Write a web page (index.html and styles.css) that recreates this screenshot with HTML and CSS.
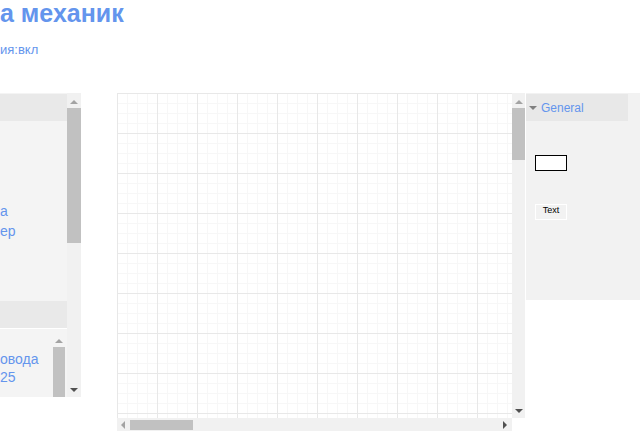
FILE: index.html
```html
<!DOCTYPE html>
<html lang="ru">
<head>
<meta charset="utf-8">
<link rel="stylesheet" href="styles.css">
</head>
<body>
<header class="top">
  <h1 class="title">а механик</h1>
  <div class="sub">ия:вкл</div>
</header>
<main class="editor">
  <section class="lib">
    <div class="lib-col">
      <div class="lib-head"></div>
      <div class="lib-body">
        <a class="lib-link">а</a>
        <a class="lib-link">ер</a>
      </div>
      <div class="lib-head"></div>
      <div class="lib-list">
        <div class="list-items">
          <a class="list-link">овода</a>
          <a class="list-link">25</a>
        </div>
        <div class="sb sb-v sb-small">
          <span class="arr up off"></span>
          <span class="thumb"></span>
        </div>
      </div>
    </div>
    <div class="sb sb-v sb-lib">
      <span class="arr up off"></span>
      <span class="thumb"></span>
      <span class="fill"></span>
      <span class="arr down"></span>
    </div>
  </section>
  <section class="canvas-wrap">
    <div class="canvas-row">
      <div class="canvas"></div>
      <div class="sb sb-v sb-canvas">
        <span class="arr up off"></span>
        <span class="thumb"></span>
        <span class="fill"></span>
        <span class="arr down"></span>
      </div>
    </div>
    <div class="sb sb-h">
      <span class="arr left"></span>
      <span class="thumb"></span>
      <span class="fill"></span>
      <span class="arr right"></span>
    </div>
  </section>
  <aside class="side">
    <div class="side-head"><span class="tri"></span>General</div>
    <div class="side-body">
      <div class="shape-rect"></div>
      <div class="shape-text">Text</div>
    </div>
  </aside>
</main>
</body>
</html>
```
FILE: styles.css
```css
html, body {
  margin: 0;
  padding: 0;
  background: #ffffff;
  overflow: hidden;
  width: 640px;
  height: 448px;
  font-family: "Liberation Sans", Arial, sans-serif;
}
.top {
  height: 93px;
}
.title {
  margin: 0;
  padding: 0;
  font-size: 25px;
  line-height: 27px;
  font-weight: bold;
  color: #6495ed;
  white-space: nowrap;
}
.sub {
  margin-top: 15px;
  font-size: 13px;
  line-height: 15px;
  color: #6495ed;
}
.editor {
  display: flex;
  align-items: flex-start;
  height: 340px;
}
.lib {
  width: 81px;
  height: 304px;
  display: flex;
  background: #f4f4f4;
}
.lib-col {
  width: 67px;
  display: flex;
  flex-direction: column;
}
.lib-head {
  height: 28px;
  background: #e9e9e9;
  border-top: 1px solid #f4f4f4;
  box-sizing: border-box;
}
.lib-body {
  height: 179px;
  display: flex;
  flex-direction: column;
  padding-top: 80px;
  box-sizing: border-box;
}
.lib-link, .list-link {
  font-size: 14px;
  line-height: 20px;
  color: #6495ed;
}
.lib-list {
  flex: 1;
  display: flex;
  border-top: 1px solid #ffffff;
}
.list-items {
  width: 53px;
  display: flex;
  flex-direction: column;
  padding-top: 21px;
}
.list-link {
  line-height: 18px;
}
.sb {
  display: flex;
  background: #f1f1f1;
}
.sb-v {
  flex-direction: column;
  align-items: center;
}
.sb-h {
  flex-direction: row;
  align-items: center;
}
.thumb {
  background: #c1c1c1;
  display: block;
}
.sb-v .thumb { width: 100%; }
.sb-h .thumb { height: 100%; }
.fill { flex: 1; }
.arr {
  display: block;
  width: 0;
  height: 0;
  flex: none;
}
.arr.up {
  border-left: 4px solid transparent;
  border-right: 4px solid transparent;
  border-bottom: 4px solid #a3a3a3;
  margin: 5px 0 4px;
}
.arr.down {
  border-left: 4px solid transparent;
  border-right: 4px solid transparent;
  border-top: 4px solid #505050;
  margin: 4px 0 5px;
}
.arr.left {
  border-top: 4px solid transparent;
  border-bottom: 4px solid transparent;
  border-right: 4px solid #a3a3a3;
  margin: 0 5px 0 4px;
}
.arr.right {
  border-top: 4px solid transparent;
  border-bottom: 4px solid transparent;
  border-left: 4px solid #505050;
  margin: 0 5px 0 4px;
}
.sb-lib {
  width: 14px;
  height: 304px;
  padding-top: 2px;
  box-sizing: border-box;
}
.sb-lib .thumb { height: 135px; }
.sb-small {
  width: 12px;
  margin-top: 5px;
  background: #f4f4f4;
}
.sb-small .thumb { flex: 1; height: auto; }
.canvas-wrap {
  margin-left: 36px;
  width: 408px;
  display: flex;
  flex-direction: column;
}
.canvas-row {
  display: flex;
  height: 325px;
}
.canvas {
  width: 395px;
  height: 325px;
  background-color: #ffffff;
  background-image:
    linear-gradient(to right, #e8e8e8 1px, transparent 1px),
    linear-gradient(to bottom, #e8e8e8 1px, transparent 1px),
    linear-gradient(to right, #f7f7f7 1px, transparent 1px),
    linear-gradient(to bottom, #f7f7f7 1px, transparent 1px);
  background-size: 40px 40px, 40px 40px, 10px 10px, 10px 10px;
  background-position: 0 0;
}
.sb-canvas {
  width: 13px;
  height: 325px;
  padding-top: 2px;
  box-sizing: border-box;
}
.sb-canvas .thumb { height: 52px; }
.sb-h {
  width: 395px;
  height: 13px;
}
.sb-h .thumb { width: 63px; height: 10px; }
.side {
  margin-left: 1px;
  width: 114px;
  height: 207px;
  background: #f2f2f2;
  display: flex;
  flex-direction: column;
}
.side-head {
  height: 28px;
  background: #e8e8e8;
  border-top: 1px solid #f2f2f2;
  box-sizing: border-box;
  display: flex;
  align-items: center;
  font-size: 12px;
  color: #6495ed;
  padding-left: 3px;
  margin-right: 12px;
}
.tri {
  width: 0;
  height: 0;
  border-left: 4px solid transparent;
  border-right: 4px solid transparent;
  border-top: 4px solid #808080;
  margin-right: 4px;
}
.side-body {
  display: flex;
  flex-direction: column;
  padding: 34px 0 0 9px;
}
.shape-rect {
  width: 30px;
  height: 14px;
  border: 1px solid #000000;
  background: #ffffff;
}
.shape-text {
  margin-top: 33px;
  width: 32px;
  height: 16px;
  box-sizing: border-box;
  border: 1px solid #ffffff;
  font-size: 9px;
  line-height: 10px;
  text-align: center;
  color: #000000;
}
```
